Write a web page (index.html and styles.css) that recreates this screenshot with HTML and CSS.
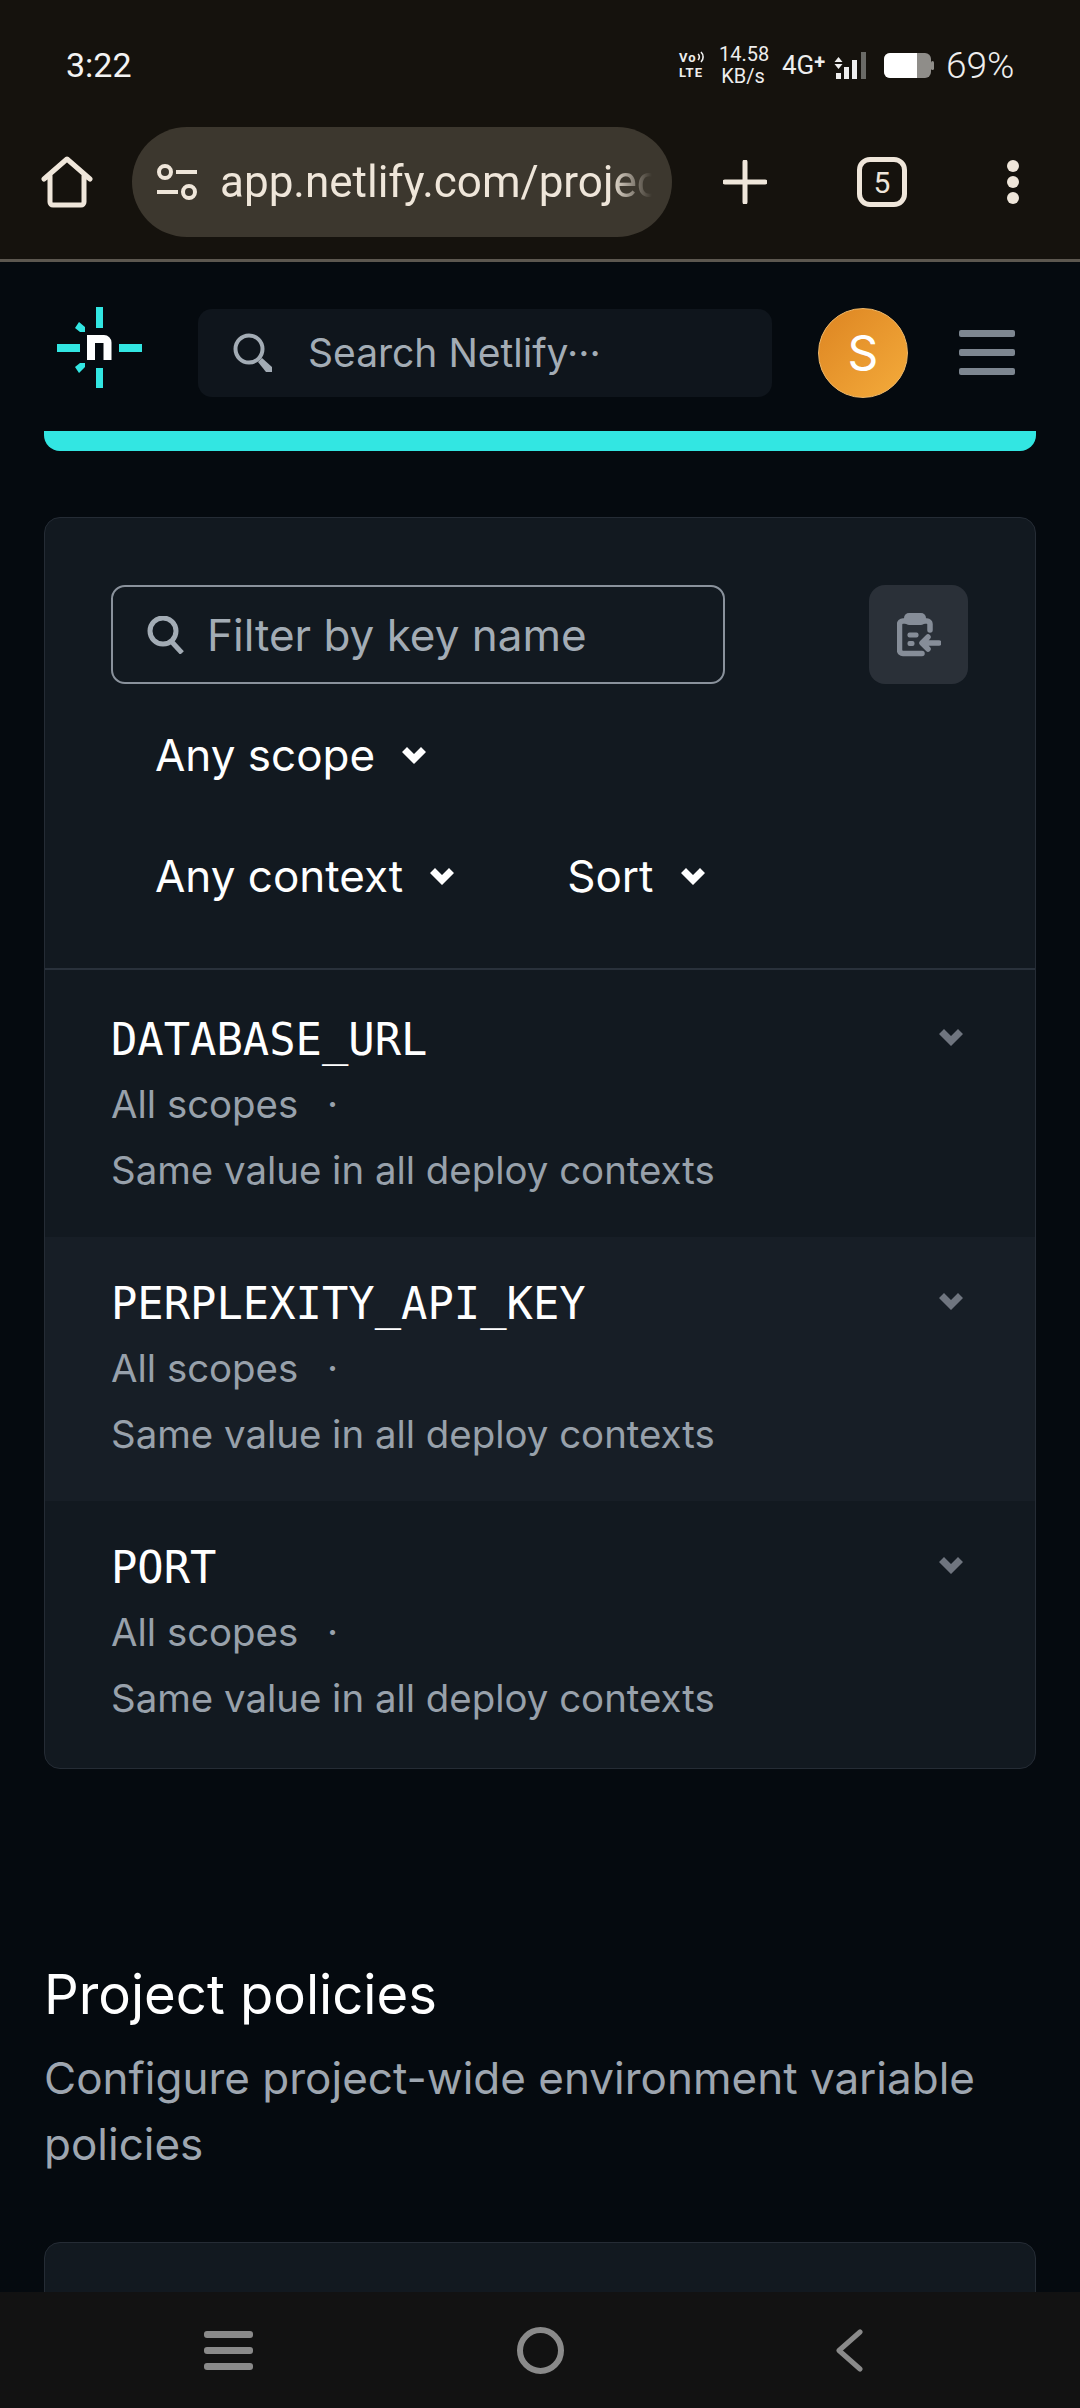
FILE: index.html
```html
<!DOCTYPE html>
<html lang="en">

<head>
	<meta name="viewport" content="width=device-width, initial-scale=1">
	<title>Environment variables</title>
	<link rel="stylesheet" href="styles.css">
</head>

<body>
	<div class="phone-top">
		<div class="status-bar">
			<span class="clock">3:22</span>
			<div class="status-right">
				<span class="volte"><span class="vo">Vo<svg width="9" height="12" viewBox="0 0 9 12"><path d="M1 3a4 4 0 0 1 0 6M4 1a7 7 0 0 1 0 10" fill="none" stroke="#f1f1f1" stroke-width="1.6"/></svg></span><b>LTE</b></span>
				<span class="speed">14.58<br>KB/s</span>
				<span class="net">4G<b>+</b></span>
				<svg class="signal" width="32" height="27" viewBox="0 0 32 27">
					<path d="M4.5 5l4 5H.5zM4.5 17l-4-5h8z" fill="#eee" />
					<rect x="2" y="21" width="5" height="6" fill="#eee" />
					<rect x="10" y="15" width="5" height="12" fill="#eee" />
					<rect x="18" y="8" width="5" height="19" fill="#eee" />
					<rect x="27" y="0" width="5" height="27" fill="#6a6a66" />
				</svg>
				<svg class="battery" width="50" height="25" viewBox="0 0 50 25">
					<rect x="0" y="0" width="47" height="25" rx="6" fill="#8f8d89" />
					<path d="M6 0h27v25H6a6 6 0 0 1-6-6V6a6 6 0 0 1 6-6z" fill="#fff" />
					<rect x="47" y="8" width="3" height="9" rx="1.5" fill="#8f8d89" />
				</svg>
				<span class="percent">69%</span>
			</div>
		</div>
		<div class="browser-bar">
			<svg class="home-icon" width="52" height="52" viewBox="0 0 52 52">
				<path d="M3 23L26 3l23 20M9 19v27a3 3 0 0 0 3 3h28a3 3 0 0 0 3-3V19" fill="none" stroke="#efe6da" stroke-width="5" stroke-linejoin="round" stroke-linecap="round" />
			</svg>
			<div class="url-pill">
				<svg width="40" height="36" viewBox="0 0 40 36">
					<g fill="none" stroke="#efe6da" stroke-width="4">
						<circle cx="8" cy="8" r="6" />
						<circle cx="32" cy="28" r="6" />
						<path d="M19 8h21M0 28h21" />
					</g>
				</svg>
				<span class="url-text">app.netlify.com/projec</span>
			</div>
			<svg class="plus-icon" width="44" height="44" viewBox="0 0 44 44">
				<path d="M22 2v40M2 22h40" stroke="#efe6da" stroke-width="5" stroke-linecap="round" />
			</svg>
			<div class="tab-count">5</div>
			<div class="more-dots"><i></i><i></i><i></i></div>
		</div>
	</div>

	<div class="page">
		<header class="site-header">
			<svg class="logo" width="85" height="81" viewBox="0 0 85 81">
				<g fill="#32e6e2">
					<rect x="39" y="0" width="7" height="21" />
					<rect x="39" y="61" width="7" height="20" />
					<rect x="0" y="37" width="23" height="8" />
					<rect x="62" y="37" width="23" height="8" />
					<path d="M18 21l4-6 6 5v5h-5zM18 60l5-4h5v4l-6 6z" />
				</g>
				<path d="M30 53V28h17a7.500 7.500 0 0 1 7.500 7.500V53h-8V36h-8.500v17z" fill="#fff" />
			</svg>
			<div class="site-search">
				<svg width="40" height="40" viewBox="0 0 40 40">
					<circle cx="16" cy="16" r="13.500" fill="none" stroke="#a3acb5" stroke-width="4" />
					<path d="M25 29l4-4 10 9v5h-6z" fill="#a3acb5" />
				</svg>
				<span>Search Netlify···</span>
			</div>
			<div class="avatar">S</div>
			<div class="menu-btn"><i></i><i></i><i></i></div>
		</header>

		<div class="accent-bar"></div>

		<section class="card">
			<div class="filters">
				<div class="filter-top">
					<div class="filter-input">
						<svg width="38" height="38" viewBox="0 0 38 38">
							<circle cx="16" cy="15" r="13" fill="none" stroke="#a3acb5" stroke-width="5" />
							<path d="M24 25l11 12" stroke="#a3acb5" stroke-width="5" />
						</svg>
						<span>Filter by key name</span>
					</div>
					<div class="import-btn">
						<svg width="44" height="44" viewBox="0 0 44 44">
							<rect x="7" y="0" width="22" height="12" rx="5" fill="#868d98" />
							<path d="M10 8H6a3.500 3.500 0 0 0-3.500 3.500V37A3.500 3.500 0 0 0 6 40.500h19M26 8h4a3 3 0 0 1 3 3v6" fill="none" stroke="#868d98" stroke-width="5.500" stroke-linecap="round" />
							<rect x="10.500" y="19.500" width="11" height="5" rx="2" fill="#868d98" />
							<rect x="10.500" y="28" width="7" height="5" rx="2" fill="#868d98" />
							<path d="M42 30H26M31 24l-6 6 6 6" fill="none" stroke="#868d98" stroke-width="5.500" stroke-linecap="round" stroke-linejoin="round" />
						</svg>
					</div>
				</div>
				<div class="filter-row">
					<span class="dropdown">Any scope <svg class="chev" width="24" height="17" viewBox="0 0 24 17"><path d="M0 5l5-5 7 7 7-7 5 5-12 12z" /></svg></span>
				</div>
				<div class="filter-row">
					<span class="dropdown">Any context <svg class="chev" width="24" height="17" viewBox="0 0 24 17"><path d="M0 5l5-5 7 7 7-7 5 5-12 12z" /></svg></span>
					<span class="dropdown">Sort <svg class="chev" width="24" height="17" viewBox="0 0 24 17"><path d="M0 5l5-5 7 7 7-7 5 5-12 12z" /></svg></span>
				</div>
			</div>

			<div class="env-row">
				<div>
					<div class="env-key">DATABASE_URL</div>
					<div class="env-meta">All scopes <span class="dot">·</span></div>
					<div class="env-meta">Same value in all deploy contexts</div>
				</div>
				<svg class="chev row-chev" width="24" height="17" viewBox="0 0 24 17"><path d="M0 5l5-5 7 7 7-7 5 5-12 12z" /></svg>
			</div>
			<div class="env-row alt">
				<div>
					<div class="env-key">PERPLEXITY_API_KEY</div>
					<div class="env-meta">All scopes <span class="dot">·</span></div>
					<div class="env-meta">Same value in all deploy contexts</div>
				</div>
				<svg class="chev row-chev" width="24" height="17" viewBox="0 0 24 17"><path d="M0 5l5-5 7 7 7-7 5 5-12 12z" /></svg>
			</div>
			<div class="env-row last">
				<div>
					<div class="env-key">PORT</div>
					<div class="env-meta">All scopes <span class="dot">·</span></div>
					<div class="env-meta">Same value in all deploy contexts</div>
				</div>
				<svg class="chev row-chev" width="24" height="17" viewBox="0 0 24 17"><path d="M0 5l5-5 7 7 7-7 5 5-12 12z" /></svg>
			</div>
		</section>

		<section class="policies">
			<h2>Project policies</h2>
			<p>Configure project-wide environment variable policies</p>
			<div class="card policy-card"></div>
		</section>
	</div>

	<nav class="nav-bar">
		<div class="nav-menu"><i></i><i></i><i></i></div>
		<div class="nav-home"></div>
		<svg class="nav-back" width="29" height="43" viewBox="0 0 29 43">
			<path d="M25 3L4 21.500 25 40" fill="none" stroke="#8a8a8a" stroke-width="5" stroke-linecap="round" stroke-linejoin="round" />
		</svg>
	</nav>
</body>

</html>
```
FILE: styles.css
```css
* {
	box-sizing: border-box;
}

html,
body {
	height: 100%;
	margin: 0;
	padding: 0;
}

body {
	font-family: Inter, "Noto Sans", sans-serif;
	background: #050a0f;
	width: 1080px;
	height: 2408px;
	overflow: hidden;
	display: flex;
	flex-direction: column;
	color: #fff;
}

.phone-top {
	height: 262px;
	flex: none;
	background: #15120d;
	border-bottom: 3px solid #5c574f;
	font-family: Roboto, sans-serif;
}

.status-bar {
	height: 127px;
	padding: 40px 66px 0 66px;
	display: flex;
	justify-content: space-between;
	align-items: flex-start;
}

.clock {
	font-size: 34px;
	line-height: 50px;
	color: #f3f3f3;
}

.status-right {
	display: flex;
	align-items: center;
	height: 50px;
	color: #eee;
}

.volte {
	display: flex;
	flex-direction: column;
	width: 28px;
	font-size: 13px;
	line-height: 15.5px;
	letter-spacing: 1px;
	margin-right: 12px;
}

.vo {
	display: flex;
	align-items: center;
	font-weight: 700;
}

.speed {
	width: 48px;
	font-size: 20px;
	line-height: 22px;
	text-align: center;
	margin-right: 15px;
}

.net {
	width: 43px;
	font-size: 26px;
	margin-right: 9px;
	white-space: nowrap;
}

.net b {
	font-size: 20px;
	vertical-align: 5px;
}

.signal {
	margin-right: 18px;
}

.battery {
	margin-right: 12px;
}

.percent {
	width: 68px;
	font-size: 37px;
	font-weight: 300;
	white-space: nowrap;
}

.browser-bar {
	display: flex;
	align-items: center;
	height: 110px;
	padding: 0 30px 0 41px;
}

.url-pill {
	width: 540px;
	height: 110px;
	margin-left: 39px;
	background: #3c372e;
	border-radius: 55px;
	display: flex;
	align-items: center;
	padding: 0 14px 0 25px;
	gap: 23px;
	overflow: hidden;
}

.url-pill svg {
	flex: none;
}

.url-text {
	font-size: 44px;
	color: #efe6da;
	white-space: nowrap;
	-webkit-mask-image: linear-gradient(to right, #000 calc(100% - 50px), transparent calc(100% - 8px));
	mask-image: linear-gradient(to right, #000 calc(100% - 50px), transparent calc(100% - 8px));
}

.plus-icon {
	margin-left: 51px;
}

.tab-count {
	width: 50px;
	height: 50px;
	margin-left: 90px;
	border: 5px solid #efe6da;
	border-radius: 13px;
	color: #efe6da;
	font-size: 30px;
	display: flex;
	align-items: center;
	justify-content: center;
}

.more-dots {
	margin-left: 100px;
	display: flex;
	flex-direction: column;
	gap: 4px;
}

.more-dots i {
	width: 12px;
	height: 12px;
	border-radius: 50%;
	background: #efe6da;
}

.page {
	flex: 1;
	min-height: 0;
	overflow: hidden;
	padding: 0 44px;
}

.site-header {
	display: flex;
	align-items: center;
	height: 169px;
	margin: 0 -44px;
	padding: 12px 65px 0 57px;
}

.logo {
	margin-top: -10px;
}

.site-search {
	width: 574px;
	height: 88px;
	margin-left: 56px;
	background: #0f151c;
	border-radius: 14px;
	display: flex;
	align-items: center;
	padding: 0 35px;
	gap: 35px;
	color: #a3acb5;
	font-size: 39px;
}

.avatar {
	width: 90px;
	height: 90px;
	margin-left: 46px;
	border-radius: 50%;
	background: linear-gradient(135deg, #dd8522, #f4ab3b);
	border: 1px solid #eeb768;
	display: flex;
	align-items: center;
	justify-content: center;
	font-size: 48px;
}

.menu-btn {
	margin-left: 51px;
	display: flex;
	flex-direction: column;
	gap: 12px;
}

.menu-btn i {
	width: 56px;
	height: 7px;
	border-radius: 2px;
	background: #7d8690;
}

.accent-bar {
	height: 20px;
	background: #32e6e2;
	border-radius: 0 0 16px 16px;
}

.card {
	margin-top: 66px;
	background: #121920;
	border: 1px solid #252c35;
	border-radius: 16px;
	overflow: hidden;
}

.filters {
	padding: 67px 67px 0 66px;
	height: 452px;
	border-bottom: 2px solid #29313b;
}

.filter-top {
	display: flex;
	justify-content: space-between;
	align-items: center;
}

.filter-input {
	width: 614px;
	height: 99px;
	border: 2px solid #8a929c;
	border-radius: 14px;
	display: flex;
	align-items: center;
	padding: 0 34px;
	gap: 22px;
	color: #a3acb5;
	font-size: 44px;
}

.import-btn {
	width: 99px;
	height: 99px;
	background: #2a3038;
	border-radius: 16px;
	display: flex;
	align-items: center;
	justify-content: center;
}

.filter-row {
	display: flex;
	gap: 113px;
	padding-left: 44px;
	height: 120px;
	align-items: center;
}

.filter-top+.filter-row {
	margin-top: 11px;
}

.filter-row+.filter-row {
	margin-top: 1px;
}

.dropdown {
	font-size: 44px;
	display: flex;
	align-items: center;
	gap: 27px;
}

.chev {
	fill: #fff;
}

.env-row {
	height: 267px;
	padding: 39px 72px 0 66px;
	display: flex;
	justify-content: space-between;
	align-items: flex-start;
}

.env-row.alt {
	height: 264px;
	padding-top: 36px;
	background: #171e26;
}

.env-row.last {
	padding-top: 36px;
}

.env-key {
	font-family: "DejaVu Sans Mono", monospace;
	font-size: 43.8px;
	line-height: 62px;
}

.env-meta {
	font-size: 38.4px;
	line-height: 66px;
	color: #98a1ab;
}

.dot {
	margin-left: 18px;
}

.row-chev {
	margin-top: 20px;
	fill: #6f757f;
}

.policies {
	padding-top: 191px;
}

.policies h2 {
	margin: 0;
	font-size: 54.4px;
	line-height: 68px;
	font-weight: 400;
}

.policies p {
	margin: 17px 0 0;
	font-size: 44px;
	line-height: 66px;
	color: #9ea6b0;
}

.policy-card {
	margin-top: 65px;
	height: 300px;
}

.nav-bar {
	flex: none;
	height: 116px;
	background: #121212;
	display: flex;
	align-items: center;
	padding-left: 204px;
}

.nav-menu {
	display: flex;
	flex-direction: column;
	gap: 9px;
}

.nav-menu i {
	width: 49px;
	height: 7px;
	border-radius: 3px;
	background: #8a8a8a;
}

.nav-home {
	width: 47px;
	height: 47px;
	margin-left: 264px;
	border: 6px solid #8a8a8a;
	border-radius: 50%;
}

.nav-back {
	margin-left: 271px;
}
```
